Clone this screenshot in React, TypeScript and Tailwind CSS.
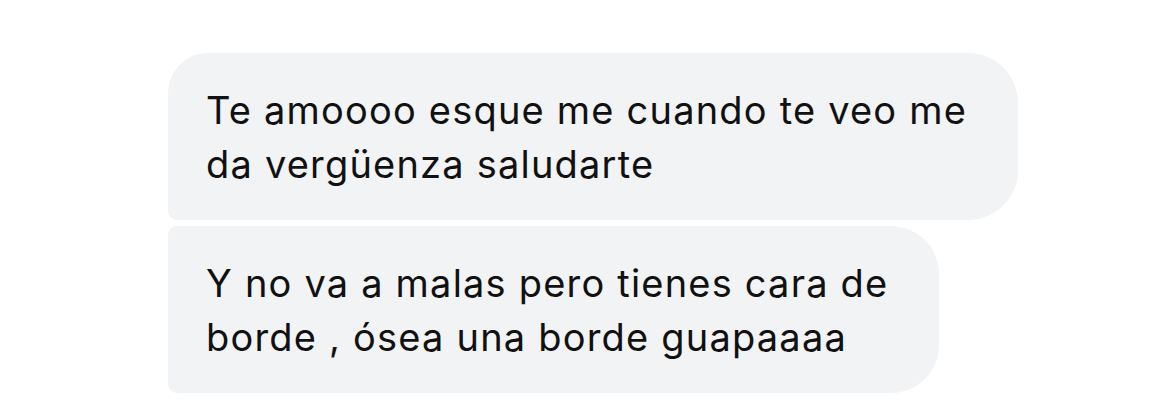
import React from "react";

const messages: { lines: string[]; corners: string }[] = [
  {
    lines: ["Te amoooo esque me cuando te veo me", "da vergüenza saludarte"],
    corners: "rounded-tl-[40px] rounded-tr-[50px] rounded-br-[50px] rounded-bl-[9px]",
  },
  {
    lines: ["Y no va a malas pero tienes cara de", "borde , ósea una borde guapaaaa"],
    corners: "rounded-tl-[9px] rounded-tr-[48px] rounded-br-[48px] rounded-bl-[9px]",
  },
];

export default function App() {
  return (
    <div className="w-[1170px] h-[400px] bg-white overflow-hidden">
      <div className="flex flex-col items-start gap-[6px] pt-[53px] pl-[168px]">
        {messages.map((m, i) => (
          <div
            key={i}
            className={`bg-[#f2f3f5] pl-[38px] pr-[51px] pt-[30px] pb-[29px] text-[#111111] text-[38px] leading-[54px] tracking-[1.2px] ${m.corners}`}
            style={{ fontFamily: "Inter, 'Liberation Sans', sans-serif" }}
          >
            {m.lines.map((l, j) => (
              <div key={j} className="whitespace-nowrap">
                {l}
              </div>
            ))}
          </div>
        ))}
      </div>
    </div>
  );
}
